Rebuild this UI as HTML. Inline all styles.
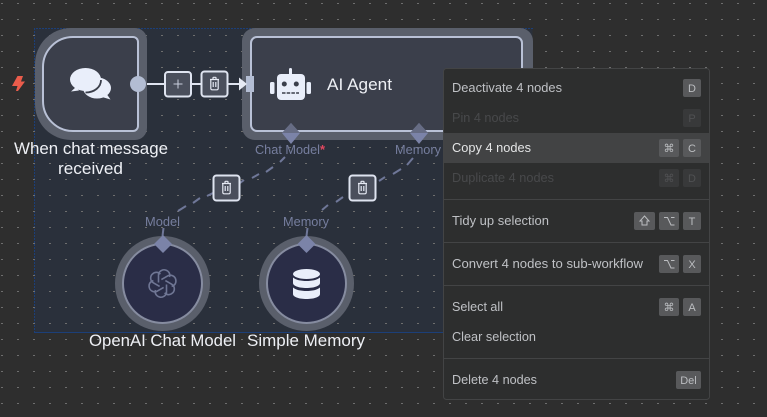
<!DOCTYPE html>
<html><head><meta charset="utf-8"><style>
html,body{margin:0;padding:0;width:767px;height:417px;overflow:hidden;background:#2e2e2e}
svg{display:block;position:absolute;left:0;top:0}
text{font-family:"Liberation Sans",sans-serif}
.n{fill:#eef0f5;font-size:17px}
.l{fill:#767e9e;font-size:13px}
.m{fill:#bfc1c5;font-size:13px}
.d{fill:#48494b;font-size:13px}
.k{font-size:11px;text-anchor:middle;fill:#bbbdc0}
</style></head><body>
<svg width="767" height="417" viewBox="0 0 767 417">
<defs>
<pattern id="g" x="1" y="3" width="16" height="16" patternUnits="userSpaceOnUse"><rect x="0" y="0" width="2" height="1" fill="#6e6e6e"/></pattern>
<g id="tr"><rect x="-13" y="-12.500" width="26" height="25" rx="3" fill="#4a4f5c" stroke="#dfe4f0" stroke-width="2"/>
<path d="M-4.500-4.500h9M-1.500-4.500v-1.600a.6.6 0 0 1 .6-.6h1.800a.6.6 0 0 1 .6.6v1.600M-3.700-4.500v9a1.300 1.300 0 0 0 1.300 1.300h4.800a1.300 1.300 0 0 0 1.300-1.300v-9M-1.300-2v5M1.300-2v5" fill="none" stroke="#e6eaf4" stroke-width="1.200"/></g>
</defs>
<rect width="767" height="417" fill="#2e2e2e"/>
<rect x="34.500" y="28.500" width="498" height="304" fill="#2a303b"/>
<path d="M34.500 333V28.500H533" fill="none" stroke="#1c3f78" stroke-width="1" stroke-dasharray="2 1"/>
<path d="M34 332.500H533" stroke="#1c3f78"/>
<rect width="767" height="417" fill="url(#g)"/>

<!-- lightning -->
<path d="M17.500 76H23L21 81.500H25L18 91H16L17.500 86H12z" fill="#ea5c4b"/>

<!-- connections -->
<path d="M146 84H241" stroke="#dfe4f0" stroke-width="2"/>
<g stroke="#6f7798" stroke-width="2" fill="none">
<path d="M285 157 280 162M273 167 266 172M259 174 252 178M244 180 240 183M213 193 207 196M200 198 193 203M186 206 178 211"/>
<path d="M413 158 407 165M401 169 393 174M385 177 379 181M343 197 336 202M328 205 322 210"/>
<path d="M163.500 228 162.500 236M307.500 228 306.500 236"/>
</g>

<!-- trigger node -->
<path d="M71 28H135a12 12 0 0 1 12 12V128a12 12 0 0 1-12 12H71a36 36 0 0 1-36-36V64a36 36 0 0 1 36-36z" fill="#5a5f6b"/>
<path d="M73 37H133a5 5 0 0 1 5 5V126a5 5 0 0 1-5 5H73a30 30 0 0 1-30-30V67a30 30 0 0 1 30-30z" fill="#3b3f4b" stroke="#b9c1d6" stroke-width="2"/>
<circle cx="138" cy="84" r="8" fill="#b3bdd3"/>
<!-- comments icon -->
<ellipse cx="97" cy="88" rx="14" ry="10.500" fill="#e9eefa"/>
<path d="M106 93 110.500 99.500 102 97z" fill="#e9eefa"/>
<path d="M76 87 71 91.500 79 90.500z" fill="#e9eefa"/>
<ellipse cx="85.500" cy="79.500" rx="15.500" ry="11.500" fill="#e9eefa"/>
<path d="M101 80C101 87 94.500 92.500 85.500 92.500" fill="none" stroke="#3b3f4b" stroke-width="1.800"/>

<!-- agent node -->
<rect x="242" y="28" width="291" height="112" rx="13" fill="#5a5f6b"/>
<rect x="251" y="37" width="271" height="94" rx="6" fill="#3b3f4b" stroke="#b9c1d6" stroke-width="2"/>
<rect x="246" y="76" width="8" height="16" fill="#b3bdd3"/>
<path d="M239 77.500 247 84 239 90.500z" fill="#e6eaf4"/>
<!-- robot -->
<g fill="#e9eefa"><rect x="277" y="74" width="28" height="26" rx="4"/><rect x="289" y="68" width="3" height="7" rx="1.400"/><rect x="270" y="82" width="4.500" height="12" rx="1.500"/><rect x="306.500" y="82" width="4.500" height="12" rx="1.500"/></g>
<circle cx="284.300" cy="84" r="2.500" fill="#3b3f4b"/><circle cx="296.300" cy="84" r="2.500" fill="#3b3f4b"/>
<path d="M282 93H299" stroke="#3b3f4b" stroke-width="1.500" stroke-dasharray="3.500 1.200"/>
<text class="n" x="327" y="90" textLength="65" lengthAdjust="spacingAndGlyphs">AI Agent</text>

<!-- diamonds -->
<path d="M291 123 300 133 291 144 282 133z" fill="#7b83a8"/>
<path d="M419 123 428 133 419 144 410 133z" fill="#7b83a8"/>
<path d="M291 123 300 133H282zM419 123 428 133H410z" fill="#666c84"/>

<text class="l" x="255" y="154" textLength="65" lengthAdjust="spacingAndGlyphs">Chat Model</text>
<text x="320" y="154" fill="#e0475f" font-size="13" font-weight="bold">*</text>
<text class="l" x="395" y="154" textLength="46" lengthAdjust="spacingAndGlyphs">Memory</text>
<text class="l" x="145" y="226" textLength="35" lengthAdjust="spacingAndGlyphs">Model</text>
<text class="l" x="283" y="226" textLength="46" lengthAdjust="spacingAndGlyphs">Memory</text>

<!-- buttons -->
<rect x="165" y="72" width="26" height="24.500" rx="3" fill="#4a4f5c" stroke="#dfe4f0" stroke-width="2"/>
<path d="M178 79.500v9M173.500 84h9" stroke="#c9cfde" stroke-width="1"/>
<use href="#tr" x="214.500" y="84"/>
<use href="#tr" x="226.500" y="188"/>
<use href="#tr" x="362.500" y="188"/>

<!-- circle nodes -->
<circle cx="162.500" cy="283.500" r="47.500" fill="#5a5f6b"/>
<circle cx="162.500" cy="283.500" r="39.500" fill="#2a2d47" stroke="#868ca0" stroke-width="2"/>
<circle cx="306.500" cy="283.500" r="47.500" fill="#5a5f6b"/>
<circle cx="306.500" cy="283.500" r="39.500" fill="#2a2d47" stroke="#868ca0" stroke-width="2"/>
<g fill="#7b83a8"><path d="M163 235 172 244 163 253 154 244z"/><path d="M306.500 235 315.500 244 306.500 253 297.500 244z"/></g>
<!-- openai -->
<g fill="none" stroke="#6f7694" stroke-width="1.600" transform="translate(162.500 283.500)">
<path id="oa" d="M-4-1V-8.500C-4-12 0-14.500 3-13.500 6.500-12.500 8-9.500 7-6.500"/>
<use href="#oa" transform="rotate(60)"/><use href="#oa" transform="rotate(120)"/><use href="#oa" transform="rotate(180)"/><use href="#oa" transform="rotate(240)"/><use href="#oa" transform="rotate(300)"/>
</g>
<!-- database -->
<g fill="#e9eefa"><ellipse cx="306.500" cy="274" rx="13.500" ry="5"/><path d="M293 277.500c3 2.500 8 3.500 13.500 3.500s10.500-1 13.500-3.500V283c0 3-6 5-13.500 5S293 286 293 283z"/><path d="M293 287.500c3 2.500 8 3.500 13.500 3.500s10.500-1 13.500-3.500V294c0 3-6 5-13.500 5S293 297 293 294z"/></g>

<text class="n" x="14" y="154" textLength="154" lengthAdjust="spacingAndGlyphs">When chat message</text>
<text class="n" x="58" y="174" textLength="65" lengthAdjust="spacingAndGlyphs">received</text>
<text class="n" x="89" y="346" textLength="147" lengthAdjust="spacingAndGlyphs">OpenAI Chat Model</text>
<text class="n" x="247" y="346" textLength="118" lengthAdjust="spacingAndGlyphs">Simple Memory</text>

<!-- menu -->
<rect x="443.500" y="68.500" width="266" height="331" rx="3" fill="#2d2e2e" stroke="#434445"/>
<rect x="444" y="133" width="265" height="30" fill="#424344"/>
<path d="M444 199.500H709M444 242.500H709M444 285.500H709M444 358.500H709" stroke="#434445"/>
<text class="m" x="452" y="92" textLength="110" lengthAdjust="spacingAndGlyphs">Deactivate 4 nodes</text>
<text class="d" x="452" y="122" textLength="67" lengthAdjust="spacingAndGlyphs">Pin 4 nodes</text>
<text class="m" x="452" y="152" textLength="79" lengthAdjust="spacingAndGlyphs" style="fill:#e4e5e6">Copy 4 nodes</text>
<text class="d" x="452" y="182" textLength="102" lengthAdjust="spacingAndGlyphs">Duplicate 4 nodes</text>
<text class="m" x="452" y="225" textLength="97" lengthAdjust="spacingAndGlyphs">Tidy up selection</text>
<text class="m" x="452" y="268" textLength="191" lengthAdjust="spacingAndGlyphs">Convert 4 nodes to sub-workflow</text>
<text class="m" x="452" y="311" textLength="51" lengthAdjust="spacingAndGlyphs">Select all</text>
<text class="m" x="452" y="341" textLength="84" lengthAdjust="spacingAndGlyphs">Clear selection</text>
<text class="m" x="452" y="384" textLength="85" lengthAdjust="spacingAndGlyphs">Delete 4 nodes</text>

<g fill="#58595b">
<rect x="683" y="79" width="18" height="18" rx="2"/>
<rect x="659" y="139" width="20" height="18" rx="2"/><rect x="683" y="139" width="18" height="18" rx="2"/>
<rect x="634" y="212" width="21" height="18" rx="2"/><rect x="659" y="212" width="20" height="18" rx="2"/><rect x="683" y="212" width="18" height="18" rx="2"/>
<rect x="659" y="255" width="20" height="18" rx="2"/><rect x="683" y="255" width="18" height="18" rx="2"/>
<rect x="659" y="298" width="20" height="18" rx="2"/><rect x="683" y="298" width="18" height="18" rx="2"/>
<rect x="676" y="371" width="25" height="18" rx="2"/>
</g>
<g fill="#38393a">
<rect x="683" y="109" width="18" height="18" rx="2"/>
<rect x="659" y="169" width="20" height="18" rx="2"/><rect x="683" y="169" width="18" height="18" rx="2"/>
</g>
<text class="k" x="692" y="92">D</text>
<text class="k" x="692" y="122" style="fill:#505153">P</text>
<text class="k" x="692" y="152">C</text>
<text class="k" x="692" y="182" style="fill:#505153">D</text>
<text class="k" x="692" y="225">T</text>
<text class="k" x="692" y="268">X</text>
<text class="k" x="692" y="311">A</text>
<text class="k" x="688.500" y="384">Del</text>
<text class="k" x="669" y="152" style="font-family:'DejaVu Sans',sans-serif">⌘</text>
<text class="k" x="669" y="182" style="font-family:'DejaVu Sans',sans-serif;fill:#505153">⌘</text>
<text class="k" x="669" y="311" style="font-family:'DejaVu Sans',sans-serif">⌘</text>
<path d="M644.500 216 649 221H647V225H642V221H640z" fill="none" stroke="#bbbdc0"/>
<path d="M664 217.500H667.500L671 225H674.500M671 217.500H674.500M664 260.500H667.500L671 268H674.500M671 260.500H674.500" fill="none" stroke="#bbbdc0"/>
</svg>
</body></html>
